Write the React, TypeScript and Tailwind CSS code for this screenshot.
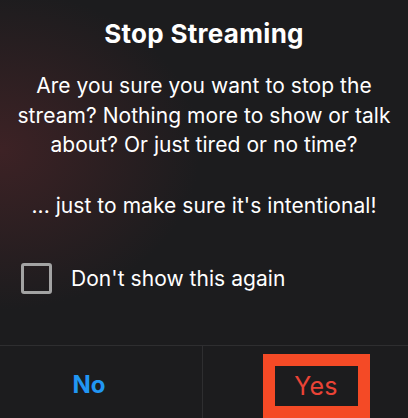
import React from "react";

export default function App() {
  return (
    <div
      className="w-[408px] h-[418px] overflow-hidden flex flex-col text-white bg-[#1c1c1e] bg-[radial-gradient(ellipse_200px_160px_at_0px_150px,#3d2225_0%,#1c1c1e_100%)]"
      style={{ fontFamily: "Inter, 'Noto Sans', sans-serif" }}
    >
      <div className="pt-[19px] text-center text-[26px] leading-[30px] font-bold tracking-[0.3px]">Stop Streaming</div>
      <div className="mt-[22px] text-center text-[21px] leading-[29.5px] tracking-[0.05px] whitespace-nowrap">
        Are you sure you want to stop the
        <br />
        stream? Nothing more to show or talk
        <br />
        about? Or just tired or no time?
      </div>
      <div className="mt-[31.5px] text-center text-[21px] leading-[29.5px] tracking-[0.05px] whitespace-nowrap">
        ... just to make sure it's intentional!
      </div>
      <div className="mt-[42.5px] flex items-center pl-[21px] h-[31px]">
        <div className="w-[31px] h-[31px] border-[3px] border-[#a3a3a3] rounded-[3px]" />
        <span className="ml-[19px] text-[21px] leading-[24px] tracking-[0.05px]">Don't show this again</span>
      </div>
      <div className="mt-[51px] border-t border-[#2e2e30] grid grid-cols-[203px_1fr] flex-1">
        <div className="border-r border-[#2e2e30] flex items-center justify-center pr-[24px] pt-[6px]">
          <span className="text-[24px] font-bold text-[#2196f3] leading-[30px]">No</span>
        </div>
        <div className="flex justify-center items-start pt-[8px] pl-[21px]">
          <div className="w-[107px] h-[64px] border-[12px] border-[#f44a26] flex items-center justify-center">
            <span className="text-[25px] text-[#ea4336] leading-[30px] tracking-[0.3px]">Yes</span>
          </div>
        </div>
      </div>
    </div>
  );
}
